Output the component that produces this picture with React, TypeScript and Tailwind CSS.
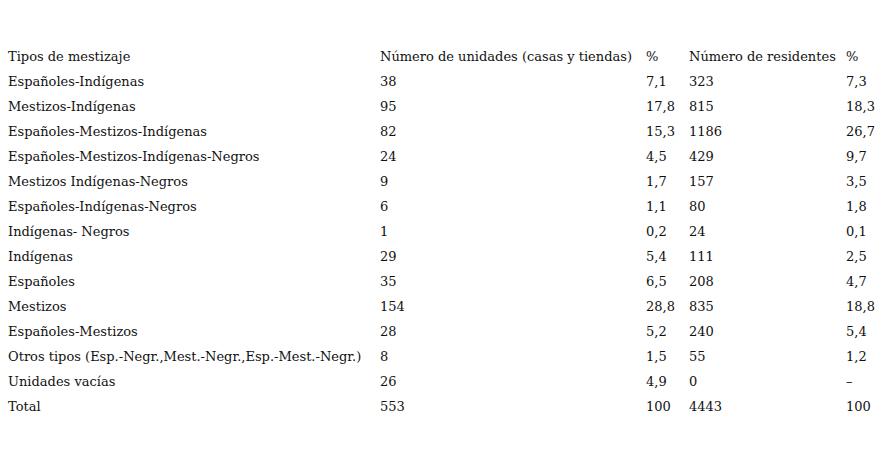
import React from "react";

const rows: [string, string, string, string, string][] = [
  ["Españoles-Indígenas", "38", "7,1", "323", "7,3"],
  ["Mestizos-Indígenas", "95", "17,8", "815", "18,3"],
  ["Españoles-Mestizos-Indígenas", "82", "15,3", "1186", "26,7"],
  ["Españoles-Mestizos-Indígenas-Negros", "24", "4,5", "429", "9,7"],
  ["Mestizos Indígenas-Negros", "9", "1,7", "157", "3,5"],
  ["Españoles-Indígenas-Negros", "6", "1,1", "80", "1,8"],
  ["Indígenas- Negros", "1", "0,2", "24", "0,1"],
  ["Indígenas", "29", "5,4", "111", "2,5"],
  ["Españoles", "35", "6,5", "208", "4,7"],
  ["Mestizos", "154", "28,8", "835", "18,8"],
  ["Españoles-Mestizos", "28", "5,2", "240", "5,4"],
  ["Otros tipos (Esp.-Negr.,Mest.-Negr.,Esp.-Mest.-Negr.)", "8", "1,5", "55", "1,2"],
  ["Unidades vacías", "26", "4,9", "0", "–"],
  ["Total", "553", "100", "4443", "100"],
];

export default function App() {
  return (
    <div className="w-[890px] h-[456px] bg-white pt-[44px] pl-[8px] text-[13px] leading-[25px] text-[#111]" style={{ fontFamily: '"DejaVu Serif", serif' }}>
      <table className="border-collapse">
        <thead>
          <tr>
            <td className="w-[372px] p-0 font-normal">Tipos de mestizaje</td>
            <td className="w-[266px] p-0">Número de unidades (casas y tiendas)</td>
            <td className="w-[43px] p-0">%</td>
            <td className="w-[157px] p-0">Número de residentes</td>
            <td className="w-[36px] p-0">%</td>
          </tr>
        </thead>
        <tbody>
          {rows.map((r, i) => (
            <tr key={i}>
              {r.map((c, j) => (
                <td key={j} className="p-0 whitespace-nowrap">{c}</td>
              ))}
            </tr>
          ))}
        </tbody>
      </table>
    </div>
  );
}
